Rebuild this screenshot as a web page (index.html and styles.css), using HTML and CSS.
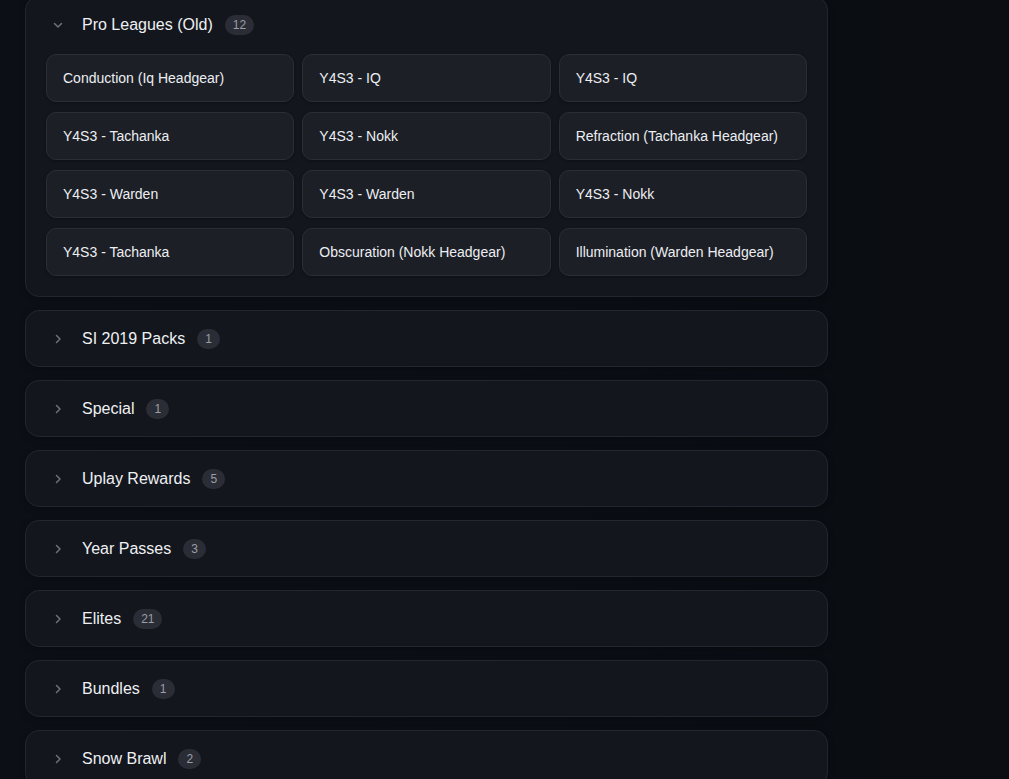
FILE: index.html
```html
<!DOCTYPE html>
<html lang="en">
<head>
<meta charset="utf-8">
<title>Collections</title>
<link rel="stylesheet" href="styles.css">
</head>
<body>
<main class="collections">
  <section class="group open">
    <div class="group-head">
      <svg class="chev" viewBox="0 0 16 16"><polyline points="4.5,6.5 8,10 11.5,6.5"/></svg>
      <span class="group-title">Pro Leagues (Old)</span>
      <span class="badge">12</span>
    </div>
    <div class="items">
      <div class="item">Conduction (Iq Headgear)</div>
      <div class="item">Y4S3 - IQ</div>
      <div class="item">Y4S3 - IQ</div>
      <div class="item">Y4S3 - Tachanka</div>
      <div class="item">Y4S3 - Nokk</div>
      <div class="item">Refraction (Tachanka Headgear)</div>
      <div class="item">Y4S3 - Warden</div>
      <div class="item">Y4S3 - Warden</div>
      <div class="item">Y4S3 - Nokk</div>
      <div class="item">Y4S3 - Tachanka</div>
      <div class="item">Obscuration (Nokk Headgear)</div>
      <div class="item">Illumination (Warden Headgear)</div>
    </div>
  </section>
  <section class="group">
    <div class="group-head">
      <svg class="chev" viewBox="0 0 16 16"><polyline points="6.5,4.5 10,8 6.5,11.5"/></svg>
      <span class="group-title">SI 2019 Packs</span>
      <span class="badge">1</span>
    </div>
  </section>
  <section class="group">
    <div class="group-head">
      <svg class="chev" viewBox="0 0 16 16"><polyline points="6.5,4.5 10,8 6.5,11.5"/></svg>
      <span class="group-title">Special</span>
      <span class="badge">1</span>
    </div>
  </section>
  <section class="group">
    <div class="group-head">
      <svg class="chev" viewBox="0 0 16 16"><polyline points="6.5,4.5 10,8 6.5,11.5"/></svg>
      <span class="group-title">Uplay Rewards</span>
      <span class="badge">5</span>
    </div>
  </section>
  <section class="group">
    <div class="group-head">
      <svg class="chev" viewBox="0 0 16 16"><polyline points="6.5,4.5 10,8 6.5,11.5"/></svg>
      <span class="group-title">Year Passes</span>
      <span class="badge">3</span>
    </div>
  </section>
  <section class="group">
    <div class="group-head">
      <svg class="chev" viewBox="0 0 16 16"><polyline points="6.5,4.5 10,8 6.5,11.5"/></svg>
      <span class="group-title">Elites</span>
      <span class="badge">21</span>
    </div>
  </section>
  <section class="group">
    <div class="group-head">
      <svg class="chev" viewBox="0 0 16 16"><polyline points="6.5,4.5 10,8 6.5,11.5"/></svg>
      <span class="group-title">Bundles</span>
      <span class="badge">1</span>
    </div>
  </section>
  <section class="group">
    <div class="group-head">
      <svg class="chev" viewBox="0 0 16 16"><polyline points="6.5,4.5 10,8 6.5,11.5"/></svg>
      <span class="group-title">Snow Brawl</span>
      <span class="badge">2</span>
    </div>
  </section>
</main>
</body>
</html>
```
FILE: styles.css
```css
html, body {
  margin: 0;
  padding: 0;
  height: 100%;
  overflow: hidden;
}

body {
  background: linear-gradient(90deg, #0c0f16 0%, #0b0e15 55%, #0a0d13 75%, #0b0d12 100%);
  font-family: "Liberation Sans", Arial, sans-serif;
  color: #eceef2;
}

.collections {
  width: 803px;
  margin: -4px 0 0 25px;
  display: flex;
  flex-direction: column;
  gap: 13px;
}

.group {
  background: #13161d;
  border: 1px solid #23262e;
  border-radius: 14px;
  box-shadow: 0 2px 6px rgba(0, 0, 0, 0.25);
}

.group-head {
  height: 55px;
  display: flex;
  align-items: center;
  padding: 0 24px;
}

.chev {
  width: 16px;
  height: 16px;
  flex: none;
  fill: none;
  stroke: #6c707a;
  stroke-width: 1.5;
  stroke-linecap: round;
  stroke-linejoin: round;
}

.group-title {
  margin-left: 16px;
  font-size: 16px;
  color: #eef0f3;
}

.badge {
  margin-left: 12px;
  height: 20px;
  min-width: 22px;
  box-sizing: border-box;
  padding: 0 8px;
  border-radius: 10px;
  background: #2a2d35;
  color: #9a9ea7;
  font-size: 12px;
  display: inline-flex;
  align-items: center;
  justify-content: center;
}

.items {
  display: grid;
  grid-template-columns: repeat(3, 1fr);
  gap: 10px 8px;
  padding: 2px 20px 20px;
}

.item {
  height: 48px;
  box-sizing: border-box;
  display: flex;
  align-items: center;
  padding: 0 16px;
  background: #1c1f26;
  border: 1px solid #2b2e36;
  border-radius: 10px;
  font-size: 14px;
  color: #eceef2;
  box-shadow: 0 1px 3px rgba(0, 0, 0, 0.3);
}
```
